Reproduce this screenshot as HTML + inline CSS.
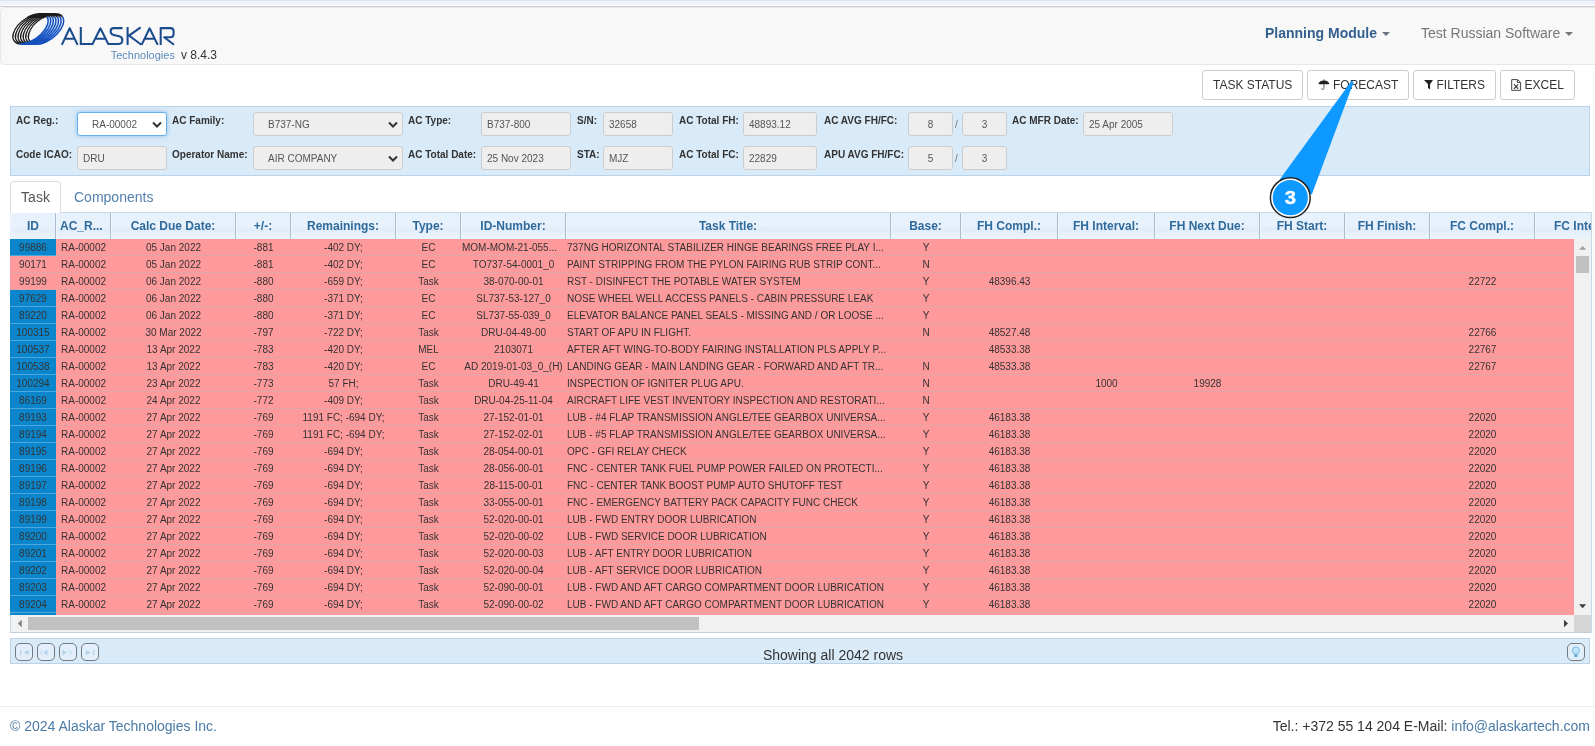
<!DOCTYPE html>
<html><head><meta charset="utf-8"><title>Alaskar</title>
<style>
*{box-sizing:border-box}
html,body{margin:0;padding:0}
body{width:1595px;height:746px;overflow:hidden;background:#fff;font-family:"Liberation Sans",sans-serif;color:#333;position:relative}
.abs{position:absolute}
#topstrip{left:0;top:0;width:1595px;height:5px;background:linear-gradient(#d8e5f2 0,#d8e5f2 1px,#edf2fb 1px,#edf2fb 100%)}
#topline{left:0;top:6px;width:1595px;height:1px;background:#cbcbcb}
#nav{left:0;top:7px;width:1600px;height:58px;background:#f8f8f8;border:1px solid #e7e7e7;border-radius:4px}
#ver{left:181px;top:48px;font-size:12px;line-height:14px;color:#333}
.navt{top:25px;font-size:14px;line-height:16px;white-space:nowrap}
#pm{left:1265px;color:#33608e;font-weight:bold}
#pm .caret{color:#6b7480;top:0}
#trs .caret{top:0}
#trs{left:1421px;color:#777}
.caret{display:inline-block;width:0;height:0;border-left:4px solid transparent;border-right:4px solid transparent;border-top:4px solid currentColor;vertical-align:middle;margin-left:5px;position:relative;top:-1px}
.btn{top:70px;height:30px;border:1px solid #ccc;border-radius:3px;background:#fff;font-size:12px;color:#333;line-height:28px;text-align:center;white-space:nowrap}
#fp{left:10px;top:106px;width:1580px;height:70px;background:#d9eaf8;border:1px solid #b9d3ea}
.lb{font-size:10px;font-weight:bold;color:#333;white-space:nowrap;line-height:13px}
.in{height:24px;background:#eee;border:1px solid #ccc;border-radius:3px;font-size:10px;color:#555;line-height:24px;padding-left:5px;white-space:nowrap;overflow:hidden}
.in.ctr{text-align:center;padding-left:0}
.sel{padding-left:14px}
.sel svg{position:absolute;right:4px;top:8px}
#tabtask{left:10px;top:181px;width:51px;height:33px;border:1px solid #ddd;border-bottom:none;border-radius:4px 4px 0 0;background:#fff;font-size:14px;color:#555;text-align:center;line-height:31px}
#tabcomp{left:74px;top:181px;font-size:14px;color:#5280ad;line-height:32px}
#tabline{left:10px;top:212px;width:1582px;height:1px;background:#cad8e6}
#grid{left:10px;top:213px;width:1582px;height:420px;overflow:hidden}
#hdr{left:0;top:0;width:1581px;height:26px;background:linear-gradient(#e5f1fc 0%,#e9f2fc 50%,#e1ecf9 62%,#eaf4fc 100%);overflow:hidden}
.hc{position:absolute;top:0;height:26px;line-height:27px;font-size:12px;font-weight:bold;color:#2f6a9c;text-align:center;white-space:nowrap;overflow:hidden;border-right:1px solid #a9bcd1;box-shadow:inset 1px 0 0 #eff6fd}
#body{left:0;top:26px;width:1564px;height:376px;background:#ff9a9c;overflow:hidden}
.rw{position:absolute;left:0;width:1558px;height:17px;border-bottom:1px solid #dfa5a7}
.c{position:absolute;top:0;height:17px;line-height:18px;font-size:10px;color:#333;text-align:center;white-space:nowrap;overflow:hidden}
.c.l{text-align:left;padding-left:1px}
.c.b{background:#0b86cc;height:17px;border-bottom:1px solid #4aa8df}
.sl{font-size:10px;color:#777;line-height:13px}
#selreg{background:#fff;border-color:#66afe9;box-shadow:0 0 4px rgba(102,175,233,.7)}

#vsb{left:1564px;top:26px;width:17px;height:376px;background:#f1f1f1}
#vth{left:1566px;top:43px;width:13px;height:17px;background:#c1c1c1}
#hsb{left:0;top:402px;width:1564px;height:17px;background:#f1f1f1;border-left:1px solid #c9d6e3}
#hth{left:18px;top:404px;width:671px;height:13px;background:#c1c1c1}
#corner{left:1564px;top:402px;width:17px;height:17px;background:#d6d6d6}
#gridbot{left:0;top:419px;width:1582px;height:1px;background:#c3ced9}
#gridr{left:1581px;top:0;width:1px;height:420px;background:#c9d6e3}
#pager{left:10px;top:638px;width:1580px;height:26px;background:#d9eaf8;border:1px solid #bcd2e6}
.pb{top:643px;width:18px;height:18px;border:1px solid #727b84;border-radius:5px;background:#e2eefa}
#pgtxt{left:0;top:646px;width:1666px;text-align:center;font-size:14px;line-height:18px;color:#333}
#fline{left:0;top:706px;width:1595px;height:1px;background:#eee}
#fl{left:10px;top:717px;font-size:14px;line-height:18px;color:#4a7aa7;white-space:nowrap}
#fr{right:5px;top:717px;font-size:14px;line-height:18px;color:#333;white-space:nowrap}
#fr span{color:#4a7aa7}

.bt{top:77px;font-size:12px;line-height:16px;color:#333;white-space:nowrap}
body{will-change:transform}

</style></head><body>
<div class="abs" id="topstrip"></div><div class="abs" id="topline"></div>
<div class="abs" id="nav"></div>
<svg class="abs" id="logo" style="left:0;top:0" width="230" height="66" viewBox="0 0 230 66">
<defs><linearGradient id="lg" gradientUnits="userSpaceOnUse" x1="64" y1="16" x2="24" y2="46"><stop offset="0" stop-color="#1c46a8"/><stop offset=".5" stop-color="#1650c0"/><stop offset="1" stop-color="#1450b8"/></linearGradient><linearGradient id="lg2" gradientUnits="userSpaceOnUse" x1="64" y1="16" x2="24" y2="46"><stop offset="0" stop-color="#c4e0ff"/><stop offset=".35" stop-color="#8cc0fa"/><stop offset=".7" stop-color="#1855c4"/><stop offset="1" stop-color="#1450b8"/></linearGradient></defs>
<!--RING--><g fill="none" stroke-linecap="butt"><path d="M19.69 43.95A20.4 11.15 -36.8 0 1 26.76 17.99M22.28 43.95A20.4 11.15 -36.8 0 1 29.34 17.99M24.86 43.95A20.4 11.15 -36.8 0 1 31.93 17.99M27.44 43.95A20.4 11.15 -36.8 0 1 34.51 17.99M30.03 43.95A20.4 11.15 -36.8 0 1 37.09 17.99M32.61 43.95A20.4 11.15 -36.8 0 1 39.68 17.99M35.19 43.95A20.4 11.15 -36.8 0 1 42.26 17.99" stroke="#1c1c1c" stroke-width="1.35"/><path d="M46.83 16.68A20.4 11.15 -36.8 0 1 19.69 43.95M49.42 16.68A20.4 11.15 -36.8 0 1 22.28 43.95M52.00 16.68A20.4 11.15 -36.8 0 1 24.86 43.95M54.58 16.68A20.4 11.15 -36.8 0 1 27.44 43.95M57.17 16.68A20.4 11.15 -36.8 0 1 30.03 43.95M59.75 16.68A20.4 11.15 -36.8 0 1 32.61 43.95M62.33 16.68A20.4 11.15 -36.8 0 1 35.19 43.95" stroke="url(#lg2)" stroke-width="2.0"/><path d="M46.83 16.68A20.4 11.15 -36.8 0 1 19.69 43.95M49.42 16.68A20.4 11.15 -36.8 0 1 22.28 43.95M52.00 16.68A20.4 11.15 -36.8 0 1 24.86 43.95M54.58 16.68A20.4 11.15 -36.8 0 1 27.44 43.95M57.17 16.68A20.4 11.15 -36.8 0 1 30.03 43.95M59.75 16.68A20.4 11.15 -36.8 0 1 32.61 43.95M62.33 16.68A20.4 11.15 -36.8 0 1 35.19 43.95" stroke="url(#lg)" stroke-width="1.35"/><path d="M26.76 17.99A20.4 11.15 -36.8 0 1 46.83 16.68M29.34 17.99A20.4 11.15 -36.8 0 1 49.42 16.68M31.93 17.99A20.4 11.15 -36.8 0 1 52.00 16.68M34.51 17.99A20.4 11.15 -36.8 0 1 54.58 16.68M37.09 17.99A20.4 11.15 -36.8 0 1 57.17 16.68M39.68 17.99A20.4 11.15 -36.8 0 1 59.75 16.68M42.26 17.99A20.4 11.15 -36.8 0 1 62.33 16.68" stroke="#1c1c1c" stroke-width="1.6500000000000001"/></g><!--/RING-->
<g fill="none" stroke="#1a4b8c" stroke-width="2.05" stroke-linejoin="round" stroke-linecap="butt">
<path d="M61.8 44.9 L69.7 28.3 L77.6 44.9 M65 38.8 H74.4"/>
<path d="M80.8 27.1 V43.9 H93" stroke-linejoin="miter"/>
<path d="M92.1 44.9 L100.4 28.3 L108.7 44.9 M95.5 38.8 H105.3"/>
<path d="M122.6 28.1 H113.8 Q110.6 28.1 110.6 31.3 Q110.6 34.3 113.6 34.9 L119.4 36.2 Q122.3 36.9 122.3 40 Q122.3 43.9 118.8 43.9 H108.5"/>
<path d="M127.6 27.1 V44.9 M140.6 27.3 L129 35.6 L141.4 44.8" stroke-linejoin="miter"/>
<path d="M141.6 44.9 L149.6 28.3 L157.7 44.9 M144.8 38.8 H154.4"/>
<path d="M160.7 44.9 V28.1 H170.4 Q173.6 28.1 173.6 31.3 V34 Q173.6 37.2 170.4 37.2 H164.2 L174 44.7"/>
</g>
<text x="110.7" y="59" font-family="Liberation Sans" font-size="10" fill="#5f8bbd" textLength="64.2" lengthAdjust="spacingAndGlyphs">Technologies</text>
</svg>
<div class="abs" id="ver">v 8.4.3</div>
<div class="abs navt" id="pm">Planning Module<span class="caret"></span></div>
<div class="abs navt" id="trs">Test Russian Software<span class="caret"></span></div>
<div class="abs btn" style="left:1202px;width:101px"></div>
<div class="abs btn" style="left:1307px;width:102px"></div>
<div class="abs btn" style="left:1413px;width:83px"></div>
<div class="abs btn" style="left:1500px;width:75px"></div>
<div class="abs bt" style="left:1213px">TASK STATUS</div>
<div class="abs bt" style="left:1333px">FORECAST</div>
<div class="abs bt" style="left:1436.5px">FILTERS</div>
<div class="abs bt" style="left:1524.5px">EXCEL</div>
<svg class="abs" style="left:1317px;top:78px" width="14" height="14" viewBox="1317 78 14 14"><path d="M1318.4 84.5 Q1318.9 80.6 1323.9 80.5 Q1328.9 80.6 1329.3 84.5 Q1327.9 83.5 1326.6 84.5 Q1325.2 83.4 1323.9 84.4 Q1322.5 83.4 1321.2 84.5 Q1319.8 83.5 1318.4 84.5Z" fill="#222"/><path d="M1323.9 79.4 V80.8" stroke="#222" stroke-width="0.9" fill="none"/><path d="M1323.9 84 V88.3 Q1323.9 89.5 1322.7 89.5 Q1321.6 89.5 1321.5 88.4" stroke="#555" stroke-width="0.9" fill="none"/></svg>
<svg class="abs" style="left:1423px;top:78px" width="12" height="14" viewBox="1423 78 12 14"><path d="M1424 80 H1433 L1430.1 84.2 V89.6 L1428 88 V84.2 Z" fill="#222"/></svg>
<svg class="abs" style="left:1510px;top:78px" width="13" height="14" viewBox="1510 78 13 14"><path d="M1511.7 79.6 H1517.6 L1520.6 82.4 V90.3 H1511.7 Z M1517.4 79.8 V82.6 H1520.4" fill="none" stroke="#444" stroke-width="1"/><path d="M1514 84.4 L1518.2 88.8 M1518.2 84.4 L1514 88.8" stroke="#333" stroke-width="1.1" fill="none"/></svg>
<div class="abs" id="fp"></div>
<div class="abs" id="tabline"></div>
<div class="abs" id="tabtask">Task</div>
<div class="abs" id="tabcomp">Components</div>
<div class="abs" id="grid">
 <div class="abs" id="hdr"><div class="hc" style="left:1px;width:45px">ID</div><div class="hc" style="left:46px;width:55px;text-align:left;padding-left:4px">AC_R...</div><div class="hc" style="left:101px;width:125px">Calc Due Date:</div><div class="hc" style="left:226px;width:55px">+/-:</div><div class="hc" style="left:281px;width:105px">Remainings:</div><div class="hc" style="left:386px;width:65px">Type:</div><div class="hc" style="left:451px;width:105px">ID-Number:</div><div class="hc" style="left:556px;width:325px">Task Title:</div><div class="hc" style="left:881px;width:70px">Base:</div><div class="hc" style="left:951px;width:97px">FH Compl.:</div><div class="hc" style="left:1048px;width:97px">FH Interval:</div><div class="hc" style="left:1145px;width:105px">FH Next Due:</div><div class="hc" style="left:1250px;width:85px">FH Start:</div><div class="hc" style="left:1335px;width:85px">FH Finish:</div><div class="hc" style="left:1420px;width:105px">FC Compl.:</div><div class="hc" style="left:1525px;width:105px">FC Interval:</div></div>
 <div class="abs" id="body"><div class="rw" style="top:0px"><div class="c b" style="left:0px;width:46px">99886</div><div class="c" style="left:46px;width:55px">RA-00002</div><div class="c" style="left:101px;width:125px">05 Jan 2022</div><div class="c" style="left:226px;width:55px">-881</div><div class="c" style="left:281px;width:105px">-402 DY;</div><div class="c" style="left:386px;width:65px">EC</div><div class="c l" style="left:451px;width:105px">MOM-MOM-21-055...</div><div class="c l" style="left:556px;width:325px">737NG HORIZONTAL STABILIZER HINGE BEARINGS FREE PLAY I...</div><div class="c" style="left:881px;width:70px">Y</div></div><div class="rw" style="top:17px"><div class="c" style="left:0px;width:46px">90171</div><div class="c" style="left:46px;width:55px">RA-00002</div><div class="c" style="left:101px;width:125px">05 Jan 2022</div><div class="c" style="left:226px;width:55px">-881</div><div class="c" style="left:281px;width:105px">-402 DY;</div><div class="c" style="left:386px;width:65px">EC</div><div class="c" style="left:451px;width:105px">TO737-54-0001_0</div><div class="c l" style="left:556px;width:325px">PAINT STRIPPING FROM THE PYLON FAIRING RUB STRIP CONT...</div><div class="c" style="left:881px;width:70px">N</div></div><div class="rw" style="top:34px"><div class="c" style="left:0px;width:46px">99199</div><div class="c" style="left:46px;width:55px">RA-00002</div><div class="c" style="left:101px;width:125px">06 Jan 2022</div><div class="c" style="left:226px;width:55px">-880</div><div class="c" style="left:281px;width:105px">-659 DY;</div><div class="c" style="left:386px;width:65px">Task</div><div class="c" style="left:451px;width:105px">38-070-00-01</div><div class="c l" style="left:556px;width:325px">RST - DISINFECT THE POTABLE WATER SYSTEM</div><div class="c" style="left:881px;width:70px">Y</div><div class="c" style="left:951px;width:97px">48396.43</div><div class="c" style="left:1420px;width:105px">22722</div></div><div class="rw" style="top:51px"><div class="c b" style="left:0px;width:46px">97629</div><div class="c" style="left:46px;width:55px">RA-00002</div><div class="c" style="left:101px;width:125px">06 Jan 2022</div><div class="c" style="left:226px;width:55px">-880</div><div class="c" style="left:281px;width:105px">-371 DY;</div><div class="c" style="left:386px;width:65px">EC</div><div class="c" style="left:451px;width:105px">SL737-53-127_0</div><div class="c l" style="left:556px;width:325px">NOSE WHEEL WELL ACCESS PANELS - CABIN PRESSURE LEAK</div><div class="c" style="left:881px;width:70px">Y</div></div><div class="rw" style="top:68px"><div class="c b" style="left:0px;width:46px">89220</div><div class="c" style="left:46px;width:55px">RA-00002</div><div class="c" style="left:101px;width:125px">06 Jan 2022</div><div class="c" style="left:226px;width:55px">-880</div><div class="c" style="left:281px;width:105px">-371 DY;</div><div class="c" style="left:386px;width:65px">EC</div><div class="c" style="left:451px;width:105px">SL737-55-039_0</div><div class="c l" style="left:556px;width:325px">ELEVATOR BALANCE PANEL SEALS - MISSING AND / OR LOOSE ...</div><div class="c" style="left:881px;width:70px">Y</div></div><div class="rw" style="top:85px"><div class="c b" style="left:0px;width:46px">100315</div><div class="c" style="left:46px;width:55px">RA-00002</div><div class="c" style="left:101px;width:125px">30 Mar 2022</div><div class="c" style="left:226px;width:55px">-797</div><div class="c" style="left:281px;width:105px">-722 DY;</div><div class="c" style="left:386px;width:65px">Task</div><div class="c" style="left:451px;width:105px">DRU-04-49-00</div><div class="c l" style="left:556px;width:325px">START OF APU IN FLIGHT.</div><div class="c" style="left:881px;width:70px">N</div><div class="c" style="left:951px;width:97px">48527.48</div><div class="c" style="left:1420px;width:105px">22766</div></div><div class="rw" style="top:102px"><div class="c b" style="left:0px;width:46px">100537</div><div class="c" style="left:46px;width:55px">RA-00002</div><div class="c" style="left:101px;width:125px">13 Apr 2022</div><div class="c" style="left:226px;width:55px">-783</div><div class="c" style="left:281px;width:105px">-420 DY;</div><div class="c" style="left:386px;width:65px">MEL</div><div class="c" style="left:451px;width:105px">2103071</div><div class="c l" style="left:556px;width:325px">AFTER AFT WING-TO-BODY FAIRING INSTALLATION PLS APPLY P...</div><div class="c" style="left:951px;width:97px">48533.38</div><div class="c" style="left:1420px;width:105px">22767</div></div><div class="rw" style="top:119px"><div class="c b" style="left:0px;width:46px">100538</div><div class="c" style="left:46px;width:55px">RA-00002</div><div class="c" style="left:101px;width:125px">13 Apr 2022</div><div class="c" style="left:226px;width:55px">-783</div><div class="c" style="left:281px;width:105px">-420 DY;</div><div class="c" style="left:386px;width:65px">EC</div><div class="c" style="left:451px;width:105px">AD 2019-01-03_0_(H)</div><div class="c l" style="left:556px;width:325px">LANDING GEAR - MAIN LANDING GEAR - FORWARD AND AFT TR...</div><div class="c" style="left:881px;width:70px">N</div><div class="c" style="left:951px;width:97px">48533.38</div><div class="c" style="left:1420px;width:105px">22767</div></div><div class="rw" style="top:136px"><div class="c b" style="left:0px;width:46px">100294</div><div class="c" style="left:46px;width:55px">RA-00002</div><div class="c" style="left:101px;width:125px">23 Apr 2022</div><div class="c" style="left:226px;width:55px">-773</div><div class="c" style="left:281px;width:105px">57 FH;</div><div class="c" style="left:386px;width:65px">Task</div><div class="c" style="left:451px;width:105px">DRU-49-41</div><div class="c l" style="left:556px;width:325px">INSPECTION OF IGNITER PLUG APU.</div><div class="c" style="left:881px;width:70px">N</div><div class="c" style="left:1048px;width:97px">1000</div><div class="c" style="left:1145px;width:105px">19928</div></div><div class="rw" style="top:153px"><div class="c b" style="left:0px;width:46px">86169</div><div class="c" style="left:46px;width:55px">RA-00002</div><div class="c" style="left:101px;width:125px">24 Apr 2022</div><div class="c" style="left:226px;width:55px">-772</div><div class="c" style="left:281px;width:105px">-409 DY;</div><div class="c" style="left:386px;width:65px">Task</div><div class="c" style="left:451px;width:105px">DRU-04-25-11-04</div><div class="c l" style="left:556px;width:325px">AIRCRAFT LIFE VEST INVENTORY INSPECTION AND RESTORATI...</div><div class="c" style="left:881px;width:70px">N</div></div><div class="rw" style="top:170px"><div class="c b" style="left:0px;width:46px">89193</div><div class="c" style="left:46px;width:55px">RA-00002</div><div class="c" style="left:101px;width:125px">27 Apr 2022</div><div class="c" style="left:226px;width:55px">-769</div><div class="c" style="left:281px;width:105px">1191 FC; -694 DY;</div><div class="c" style="left:386px;width:65px">Task</div><div class="c" style="left:451px;width:105px">27-152-01-01</div><div class="c l" style="left:556px;width:325px">LUB - #4 FLAP TRANSMISSION ANGLE/TEE GEARBOX UNIVERSA...</div><div class="c" style="left:881px;width:70px">Y</div><div class="c" style="left:951px;width:97px">46183.38</div><div class="c" style="left:1420px;width:105px">22020</div></div><div class="rw" style="top:187px"><div class="c b" style="left:0px;width:46px">89194</div><div class="c" style="left:46px;width:55px">RA-00002</div><div class="c" style="left:101px;width:125px">27 Apr 2022</div><div class="c" style="left:226px;width:55px">-769</div><div class="c" style="left:281px;width:105px">1191 FC; -694 DY;</div><div class="c" style="left:386px;width:65px">Task</div><div class="c" style="left:451px;width:105px">27-152-02-01</div><div class="c l" style="left:556px;width:325px">LUB - #5 FLAP TRANSMISSION ANGLE/TEE GEARBOX UNIVERSA...</div><div class="c" style="left:881px;width:70px">Y</div><div class="c" style="left:951px;width:97px">46183.38</div><div class="c" style="left:1420px;width:105px">22020</div></div><div class="rw" style="top:204px"><div class="c b" style="left:0px;width:46px">89195</div><div class="c" style="left:46px;width:55px">RA-00002</div><div class="c" style="left:101px;width:125px">27 Apr 2022</div><div class="c" style="left:226px;width:55px">-769</div><div class="c" style="left:281px;width:105px">-694 DY;</div><div class="c" style="left:386px;width:65px">Task</div><div class="c" style="left:451px;width:105px">28-054-00-01</div><div class="c l" style="left:556px;width:325px">OPC - GFI RELAY CHECK</div><div class="c" style="left:881px;width:70px">Y</div><div class="c" style="left:951px;width:97px">46183.38</div><div class="c" style="left:1420px;width:105px">22020</div></div><div class="rw" style="top:221px"><div class="c b" style="left:0px;width:46px">89196</div><div class="c" style="left:46px;width:55px">RA-00002</div><div class="c" style="left:101px;width:125px">27 Apr 2022</div><div class="c" style="left:226px;width:55px">-769</div><div class="c" style="left:281px;width:105px">-694 DY;</div><div class="c" style="left:386px;width:65px">Task</div><div class="c" style="left:451px;width:105px">28-056-00-01</div><div class="c l" style="left:556px;width:325px">FNC - CENTER TANK FUEL PUMP POWER FAILED ON PROTECTI...</div><div class="c" style="left:881px;width:70px">Y</div><div class="c" style="left:951px;width:97px">46183.38</div><div class="c" style="left:1420px;width:105px">22020</div></div><div class="rw" style="top:238px"><div class="c b" style="left:0px;width:46px">89197</div><div class="c" style="left:46px;width:55px">RA-00002</div><div class="c" style="left:101px;width:125px">27 Apr 2022</div><div class="c" style="left:226px;width:55px">-769</div><div class="c" style="left:281px;width:105px">-694 DY;</div><div class="c" style="left:386px;width:65px">Task</div><div class="c" style="left:451px;width:105px">28-115-00-01</div><div class="c l" style="left:556px;width:325px">FNC - CENTER TANK BOOST PUMP AUTO SHUTOFF TEST</div><div class="c" style="left:881px;width:70px">Y</div><div class="c" style="left:951px;width:97px">46183.38</div><div class="c" style="left:1420px;width:105px">22020</div></div><div class="rw" style="top:255px"><div class="c b" style="left:0px;width:46px">89198</div><div class="c" style="left:46px;width:55px">RA-00002</div><div class="c" style="left:101px;width:125px">27 Apr 2022</div><div class="c" style="left:226px;width:55px">-769</div><div class="c" style="left:281px;width:105px">-694 DY;</div><div class="c" style="left:386px;width:65px">Task</div><div class="c" style="left:451px;width:105px">33-055-00-01</div><div class="c l" style="left:556px;width:325px">FNC - EMERGENCY BATTERY PACK CAPACITY FUNC CHECK</div><div class="c" style="left:881px;width:70px">Y</div><div class="c" style="left:951px;width:97px">46183.38</div><div class="c" style="left:1420px;width:105px">22020</div></div><div class="rw" style="top:272px"><div class="c b" style="left:0px;width:46px">89199</div><div class="c" style="left:46px;width:55px">RA-00002</div><div class="c" style="left:101px;width:125px">27 Apr 2022</div><div class="c" style="left:226px;width:55px">-769</div><div class="c" style="left:281px;width:105px">-694 DY;</div><div class="c" style="left:386px;width:65px">Task</div><div class="c" style="left:451px;width:105px">52-020-00-01</div><div class="c l" style="left:556px;width:325px">LUB - FWD ENTRY DOOR LUBRICATION</div><div class="c" style="left:881px;width:70px">Y</div><div class="c" style="left:951px;width:97px">46183.38</div><div class="c" style="left:1420px;width:105px">22020</div></div><div class="rw" style="top:289px"><div class="c b" style="left:0px;width:46px">89200</div><div class="c" style="left:46px;width:55px">RA-00002</div><div class="c" style="left:101px;width:125px">27 Apr 2022</div><div class="c" style="left:226px;width:55px">-769</div><div class="c" style="left:281px;width:105px">-694 DY;</div><div class="c" style="left:386px;width:65px">Task</div><div class="c" style="left:451px;width:105px">52-020-00-02</div><div class="c l" style="left:556px;width:325px">LUB - FWD SERVICE DOOR LUBRICATION</div><div class="c" style="left:881px;width:70px">Y</div><div class="c" style="left:951px;width:97px">46183.38</div><div class="c" style="left:1420px;width:105px">22020</div></div><div class="rw" style="top:306px"><div class="c b" style="left:0px;width:46px">89201</div><div class="c" style="left:46px;width:55px">RA-00002</div><div class="c" style="left:101px;width:125px">27 Apr 2022</div><div class="c" style="left:226px;width:55px">-769</div><div class="c" style="left:281px;width:105px">-694 DY;</div><div class="c" style="left:386px;width:65px">Task</div><div class="c" style="left:451px;width:105px">52-020-00-03</div><div class="c l" style="left:556px;width:325px">LUB - AFT ENTRY DOOR LUBRICATION</div><div class="c" style="left:881px;width:70px">Y</div><div class="c" style="left:951px;width:97px">46183.38</div><div class="c" style="left:1420px;width:105px">22020</div></div><div class="rw" style="top:323px"><div class="c b" style="left:0px;width:46px">89202</div><div class="c" style="left:46px;width:55px">RA-00002</div><div class="c" style="left:101px;width:125px">27 Apr 2022</div><div class="c" style="left:226px;width:55px">-769</div><div class="c" style="left:281px;width:105px">-694 DY;</div><div class="c" style="left:386px;width:65px">Task</div><div class="c" style="left:451px;width:105px">52-020-00-04</div><div class="c l" style="left:556px;width:325px">LUB - AFT SERVICE DOOR LUBRICATION</div><div class="c" style="left:881px;width:70px">Y</div><div class="c" style="left:951px;width:97px">46183.38</div><div class="c" style="left:1420px;width:105px">22020</div></div><div class="rw" style="top:340px"><div class="c b" style="left:0px;width:46px">89203</div><div class="c" style="left:46px;width:55px">RA-00002</div><div class="c" style="left:101px;width:125px">27 Apr 2022</div><div class="c" style="left:226px;width:55px">-769</div><div class="c" style="left:281px;width:105px">-694 DY;</div><div class="c" style="left:386px;width:65px">Task</div><div class="c" style="left:451px;width:105px">52-090-00-01</div><div class="c l" style="left:556px;width:325px">LUB - FWD AND AFT CARGO COMPARTMENT DOOR LUBRICATION</div><div class="c" style="left:881px;width:70px">Y</div><div class="c" style="left:951px;width:97px">46183.38</div><div class="c" style="left:1420px;width:105px">22020</div></div><div class="rw" style="top:357px"><div class="c b" style="left:0px;width:46px">89204</div><div class="c" style="left:46px;width:55px">RA-00002</div><div class="c" style="left:101px;width:125px">27 Apr 2022</div><div class="c" style="left:226px;width:55px">-769</div><div class="c" style="left:281px;width:105px">-694 DY;</div><div class="c" style="left:386px;width:65px">Task</div><div class="c" style="left:451px;width:105px">52-090-00-02</div><div class="c l" style="left:556px;width:325px">LUB - FWD AND AFT CARGO COMPARTMENT DOOR LUBRICATION</div><div class="c" style="left:881px;width:70px">Y</div><div class="c" style="left:951px;width:97px">46183.38</div><div class="c" style="left:1420px;width:105px">22020</div></div><div class="rw" style="top:374px"><div class="c b" style="left:0px;width:46px">89205</div></div></div>
 <div class="abs" id="vsb"></div><div class="abs" id="vth"></div>
 <svg class="abs" style="left:1568px;top:32px" width="9" height="6" viewBox="0 0 9 6"><path d="M1 4.8 L4.6 1 L8.2 4.8Z" fill="#a0a0a0"/></svg>
 <svg class="abs" style="left:1568px;top:390px" width="9" height="6" viewBox="0 0 9 6"><path d="M1 1.2 L4.6 5.2 L8.2 1.2Z" fill="#3c3c3c"/></svg>
 <div class="abs" id="hsb"></div><div class="abs" id="hth"></div><div class="abs" id="corner"></div><div class="abs" id="gridbot"></div><div class="abs" id="gridr"></div>
 <svg class="abs" style="left:7px;top:406px" width="6" height="9" viewBox="0 0 6 9"><path d="M4.8 0.8 L0.8 4.5 L4.8 8.2Z" fill="#858585"/></svg>
 <svg class="abs" style="left:1553px;top:406px" width="6" height="9" viewBox="0 0 6 9"><path d="M1 0.8 L5 4.5 L1 8.2Z" fill="#3c3c3c"/></svg>
</div>
<div class="abs" id="pager"></div>
<div class="abs pb" style="left:15px"></div><div class="abs pb" style="left:37px"></div><div class="abs pb" style="left:59px"></div><div class="abs pb" style="left:81px"></div>
<div class="abs pb" style="left:1567px"></div>
<svg class="abs" style="left:15px;top:643px" width="90" height="18" viewBox="15 643 90 18" fill="#b3d1e9" stroke="none">
<rect x="20" y="650" width="1.2" height="5"/><path d="M28.5 650 V655 L23.8 652.5Z"/>
<path d="M47.5 649.8 V655.2 L43 652.5Z"/><path d="M42.5 650.2 L39.8 652.5 L42.5 654.8" fill="none" stroke="#b3d1e9" stroke-width="0.9"/>
<path d="M62.5 649.8 V655.2 L67 652.5Z"/><path d="M68.8 650.2 L71.5 652.5 L68.8 654.8" fill="none" stroke="#b3d1e9" stroke-width="0.9"/>
<path d="M85.8 650 V655 L90.5 652.5Z"/><rect x="93" y="650" width="1.2" height="5"/>
</svg>
<svg class="abs" style="left:1567px;top:643px" width="18" height="18" viewBox="1567 643 18 18"><circle cx="1575.9" cy="650.5" r="3.6" fill="#bfe3f8" stroke="#7fbde6" stroke-width="1"/><rect x="1574.1" y="654.3" width="3.6" height="2.6" rx="0.6" fill="#6aa9d8"/></svg>
<div class="abs" id="pgtxt">Showing all 2042 rows</div>
<div class="abs" id="fline"></div>
<div class="abs" id="fl">© 2024 Alaskar Technologies Inc.</div>
<div class="abs" id="fr">Tel.: +372 55 14 204 E-Mail: <span>info@alaskartech.com</span></div>
<svg class="abs" id="balloon" style="left:1260px;top:70px" width="110" height="160" viewBox="1260 70 110 160">
<path d="M1350.2 82.8 L1351.8 80.8 L1353.6 82.3 L1311.8 194.5 L1279.3 180 Z" fill="#0d99ff"/>
<circle cx="1290.3" cy="197.7" r="19.9" fill="#fff" stroke="#222" stroke-width="1.5"/>
<circle cx="1290.3" cy="197.7" r="17.6" fill="#0d99ff"/>
<text transform="translate(1290.3 204.3) scale(1.1 1)" x="0" y="0" text-anchor="middle" font-family="Liberation Sans" font-weight="bold" font-size="18.5" fill="#fff" stroke="#fff" stroke-width="0.3">3</text>
</svg>
<!-- filter panel contents -->
<div class="abs lb" style="left:16px;top:114px">AC Reg.:</div>
<div class="abs lb" style="left:16px;top:148px">Code ICAO:</div>
<div class="abs in sel" id="selreg" style="left:77px;top:112px;width:90px">RA-00002<svg width="10" height="8" viewBox="0 0 10 8"><path d="M1 1.5 L5 5.5 L9 1.5" fill="none" stroke="#333" stroke-width="2"/></svg></div>
<div class="abs in" style="left:77px;top:146px;width:90px">DRU</div>
<div class="abs lb" style="left:172px;top:114px">AC Family:</div>
<div class="abs lb" style="left:172px;top:148px">Operator Name:</div>
<div class="abs in sel" style="left:253px;top:112px;width:150px">B737-NG<svg width="10" height="8" viewBox="0 0 10 8"><path d="M1 1.5 L5 5.5 L9 1.5" fill="none" stroke="#333" stroke-width="2"/></svg></div>
<div class="abs in sel" style="left:253px;top:146px;width:150px">AIR COMPANY<svg width="10" height="8" viewBox="0 0 10 8"><path d="M1 1.5 L5 5.5 L9 1.5" fill="none" stroke="#333" stroke-width="2"/></svg></div>
<div class="abs lb" style="left:408px;top:114px">AC Type:</div>
<div class="abs lb" style="left:408px;top:148px">AC Total Date:</div>
<div class="abs in" style="left:481px;top:112px;width:90px">B737-800</div>
<div class="abs in" style="left:481px;top:146px;width:90px">25 Nov 2023</div>
<div class="abs lb" style="left:577px;top:114px">S/N:</div>
<div class="abs lb" style="left:577px;top:148px">STA:</div>
<div class="abs in" style="left:603px;top:112px;width:70px">32658</div>
<div class="abs in" style="left:603px;top:146px;width:70px">MJZ</div>
<div class="abs lb" style="left:679px;top:114px">AC Total FH:</div>
<div class="abs lb" style="left:679px;top:148px">AC Total FC:</div>
<div class="abs in" style="left:743px;top:112px;width:74px">48893.12</div>
<div class="abs in" style="left:743px;top:146px;width:74px">22829</div>
<div class="abs lb" style="left:824px;top:114px">AC AVG FH/FC:</div>
<div class="abs lb" style="left:824px;top:148px">APU AVG FH/FC:</div>
<div class="abs in ctr" style="left:908px;top:112px;width:45px">8</div>
<div class="abs in ctr" style="left:908px;top:146px;width:45px">5</div>
<div class="abs sl" style="left:955px;top:118px">/</div>
<div class="abs sl" style="left:955px;top:152px">/</div>
<div class="abs in ctr" style="left:962px;top:112px;width:45px">3</div>
<div class="abs in ctr" style="left:962px;top:146px;width:45px">3</div>
<div class="abs lb" style="left:1012px;top:114px">AC MFR Date:</div>
<div class="abs in" style="left:1083px;top:112px;width:90px">25 Apr 2005</div>

</body></html>
